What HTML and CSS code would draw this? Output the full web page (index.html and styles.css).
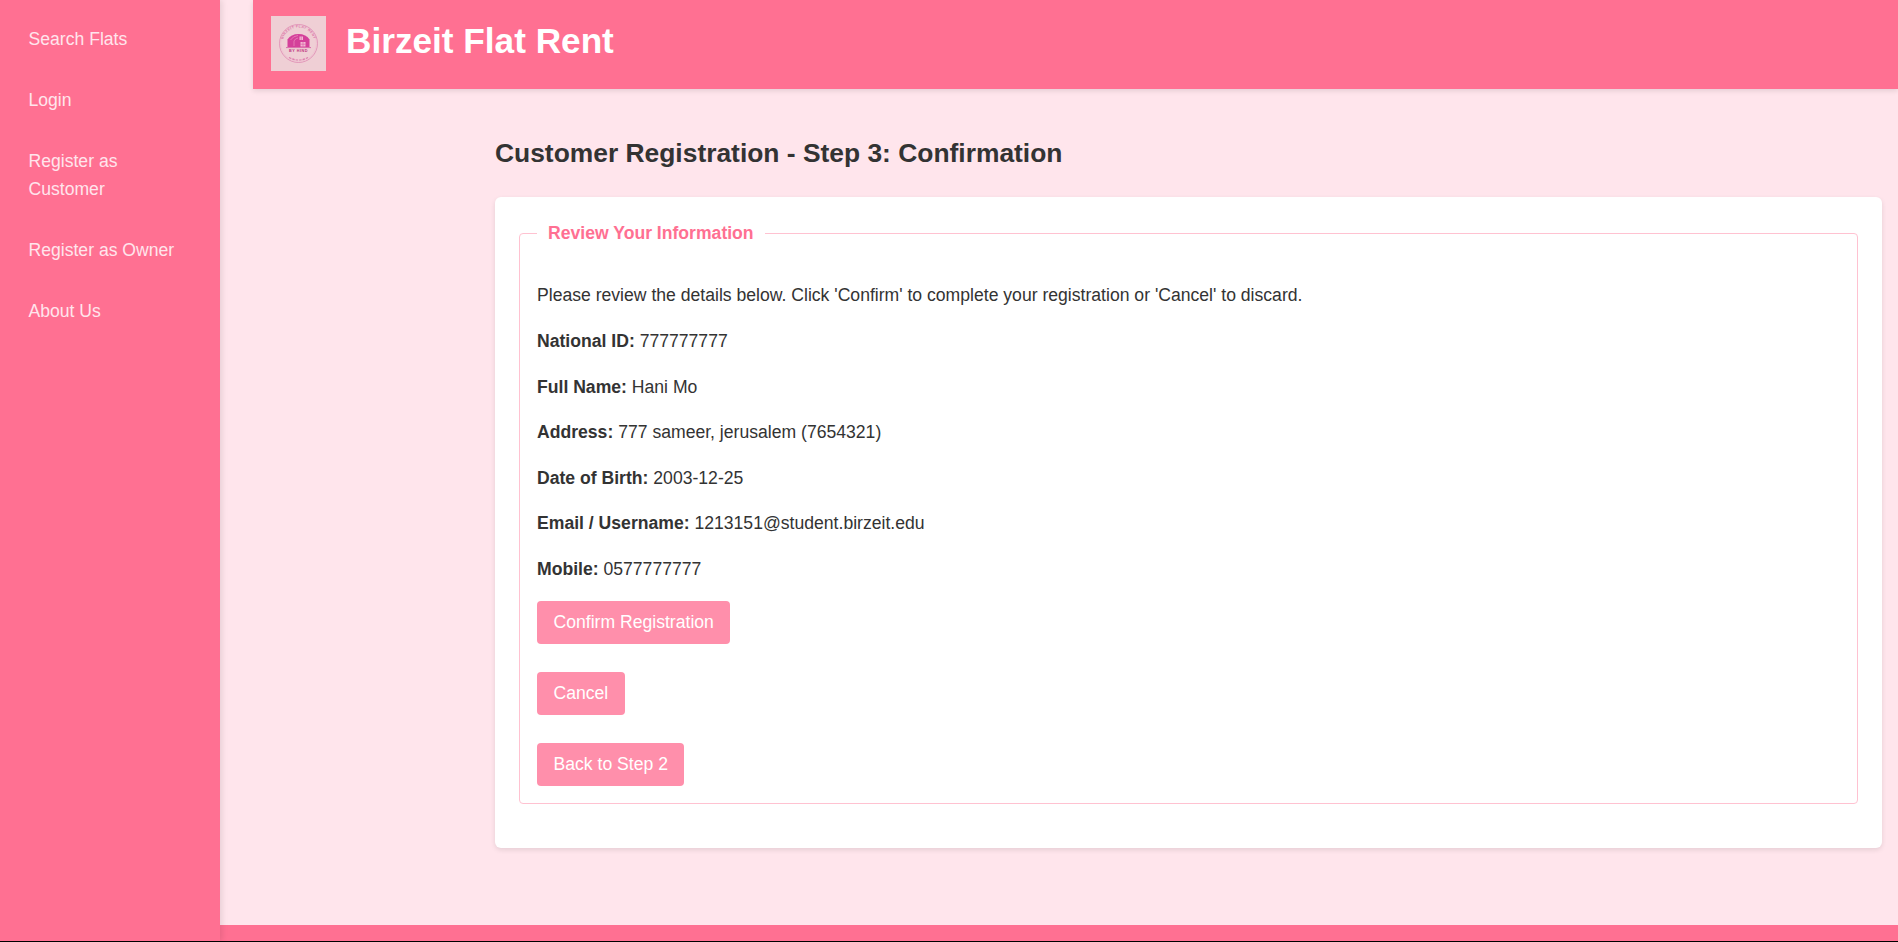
FILE: index.html
```html
<!DOCTYPE html>
<html lang="en">
<head>
<meta charset="utf-8">
<title>Birzeit Flat Rent</title>
<link rel="stylesheet" href="styles.css">
</head>
<body>
<div class="page">
  <nav class="sidebar">
    <a href="#">Search Flats</a>
    <a href="#">Login</a>
    <a href="#">Register as Customer</a>
    <a href="#">Register as Owner</a>
    <a href="#">About Us</a>
  </nav>
  <div class="main">
    <header class="topbar">
      <svg class="logo" viewBox="0 0 55 55" aria-label="Logo">
        <defs><path id="logo-arc" d="M11.5 27.5a16 16 0 0 1 32 0"/></defs>
        <rect width="55" height="55" fill="#efcfd5"/>
        <circle cx="27.5" cy="27.5" r="19" fill="none" stroke="#dd7fae" stroke-width=".7"/>
        <circle cx="27.5" cy="27.5" r="17.8" fill="none" stroke="#eeb4cc" stroke-width=".4"/>
        <text class="logo-arc-text"><textPath href="#logo-arc" startOffset="50%">BIRZEIT FLAT RENT</textPath></text>
        <path d="M16.5 31V23.5Q20 18 27.5 18Q35 18 38.5 23.5V31Z" fill="#d4409a"/>
        <path d="M19.5 24Q22 20 27 19.5M23 30V25Q24 22.5 27 22" fill="none" stroke="#ee9cc4" stroke-width=".6"/>
        <path d="M28.5 20.5h3.5v3.5h-3.5zM29.5 26h5v4.5h-5z" fill="#f2b8d2"/>
        <path d="M30.2 20.5v3.5M32 26v4.5M29.5 28.2h5" stroke="#d4409a" stroke-width=".5"/>
        <path d="M15 31.6h25" stroke="#cf3f96" stroke-width=".7"/>
        <text x="27.5" y="36.4" class="logo-text">BY HIND</text>
        <path d="M18 41.5Q27.5 46.5 37 41.5" fill="none" stroke="#dd7fae" stroke-width="1.2" stroke-dasharray="2.5 1"/>
      </svg>
      <h1>Birzeit Flat Rent</h1>
    </header>
    <main class="content">
      <h2>Customer Registration - Step 3: Confirmation</h2>
      <section class="card">
        <fieldset>
          <legend>Review Your Information</legend>
          <p>Please review the details below. Click 'Confirm' to complete your registration or 'Cancel' to discard.</p>
          <p><strong>National ID:</strong> 777777777</p>
          <p><strong>Full Name:</strong> Hani Mo</p>
          <p><strong>Address:</strong> 777 sameer, jerusalem (7654321)</p>
          <p><strong>Date of Birth:</strong> 2003-12-25</p>
          <p><strong>Email / Username:</strong> 1213151@student.birzeit.edu</p>
          <p><strong>Mobile:</strong> 0577777777</p>
          <div class="actions">
            <a class="btn" href="#">Confirm Registration</a>
            <a class="btn" href="#">Cancel</a>
            <a class="btn" href="#">Back to Step 2</a>
          </div>
        </fieldset>
      </section>
    </main>
    <footer class="footer"></footer>
  </div>
</div>
</body>
</html>
```
FILE: styles.css
```css
* { box-sizing: border-box; }
html { background: #000; }
body {
  margin: 0;
  height: 942px;
  overflow: hidden;
  font-family: "Liberation Sans", Arial, sans-serif;
  font-size: 17.6px;
  line-height: 28.8px;
  color: #333;
}
.page {
  display: flex;
  height: 941px;
  background: #ffe5ec;
}
.sidebar {
  flex: 0 0 220px;
  display: flex;
  flex-direction: column;
  gap: 32px;
  padding: 25px 28.5px;
  background: #ff7092;
  box-shadow: 2px 0 6px rgba(0, 0, 0, 0.1);
  position: relative;
  z-index: 1;
}
.sidebar a {
  color: #ffe5ec;
  text-decoration: none;
}
.main {
  flex: 1;
  min-width: 0;
  display: flex;
  flex-direction: column;
}
.topbar {
  flex: 0 0 89px;
  margin-left: 33px;
  display: flex;
  align-items: flex-start;
  gap: 20px;
  padding: 16px 18px 0;
  background: #ff7092;
  box-shadow: 0 2px 5px rgba(0, 0, 0, 0.1);
}
.logo { width: 55px; height: 55px; flex: none; }
.logo-text {
  font-size: 3.8px;
  font-weight: 700;
  fill: #c0357f;
  text-anchor: middle;
  letter-spacing: .5px;
}
.logo-arc-text {
  font-size: 3.4px;
  font-weight: 700;
  fill: #d96fa5;
  text-anchor: middle;
  letter-spacing: .5px;
}
h1 {
  margin: 0;
  font-size: 35.2px;
  line-height: 50px;
  color: #fff;
}
.content {
  flex: 1;
  padding: 46px 16px 0 275px;
}
h2 {
  margin: 0 0 26.4px;
  font-size: 26.4px;
  line-height: 36px;
  color: #333;
}
.card {
  background: #fff;
  border-radius: 6px;
  padding: 21px 24px 44px;
  box-shadow: 0 2px 5px rgba(0, 0, 0, 0.1);
}
fieldset {
  margin: 0;
  padding: 33.2px 17px 16.6px;
  border: 1px solid #ffc2d1;
  border-radius: 4px;
}
legend {
  padding: 1px 11px 0;
  font-size: 17.6px;
  font-weight: 700;
  color: #ff7092;
}
p { margin: 0 0 16.8px; }
p:last-of-type { margin-bottom: 0; }
.actions {
  display: flex;
  flex-direction: column;
  align-items: flex-start;
  gap: 28.4px;
  margin-top: 17px;
}
.btn {
  display: block;
  padding: 7px 16.5px;
  background: #ff8fab;
  border-radius: 4px;
  color: #fff;
  text-decoration: none;
}
.footer {
  flex: 0 0 16px;
  background: #ff7092;
}
```
